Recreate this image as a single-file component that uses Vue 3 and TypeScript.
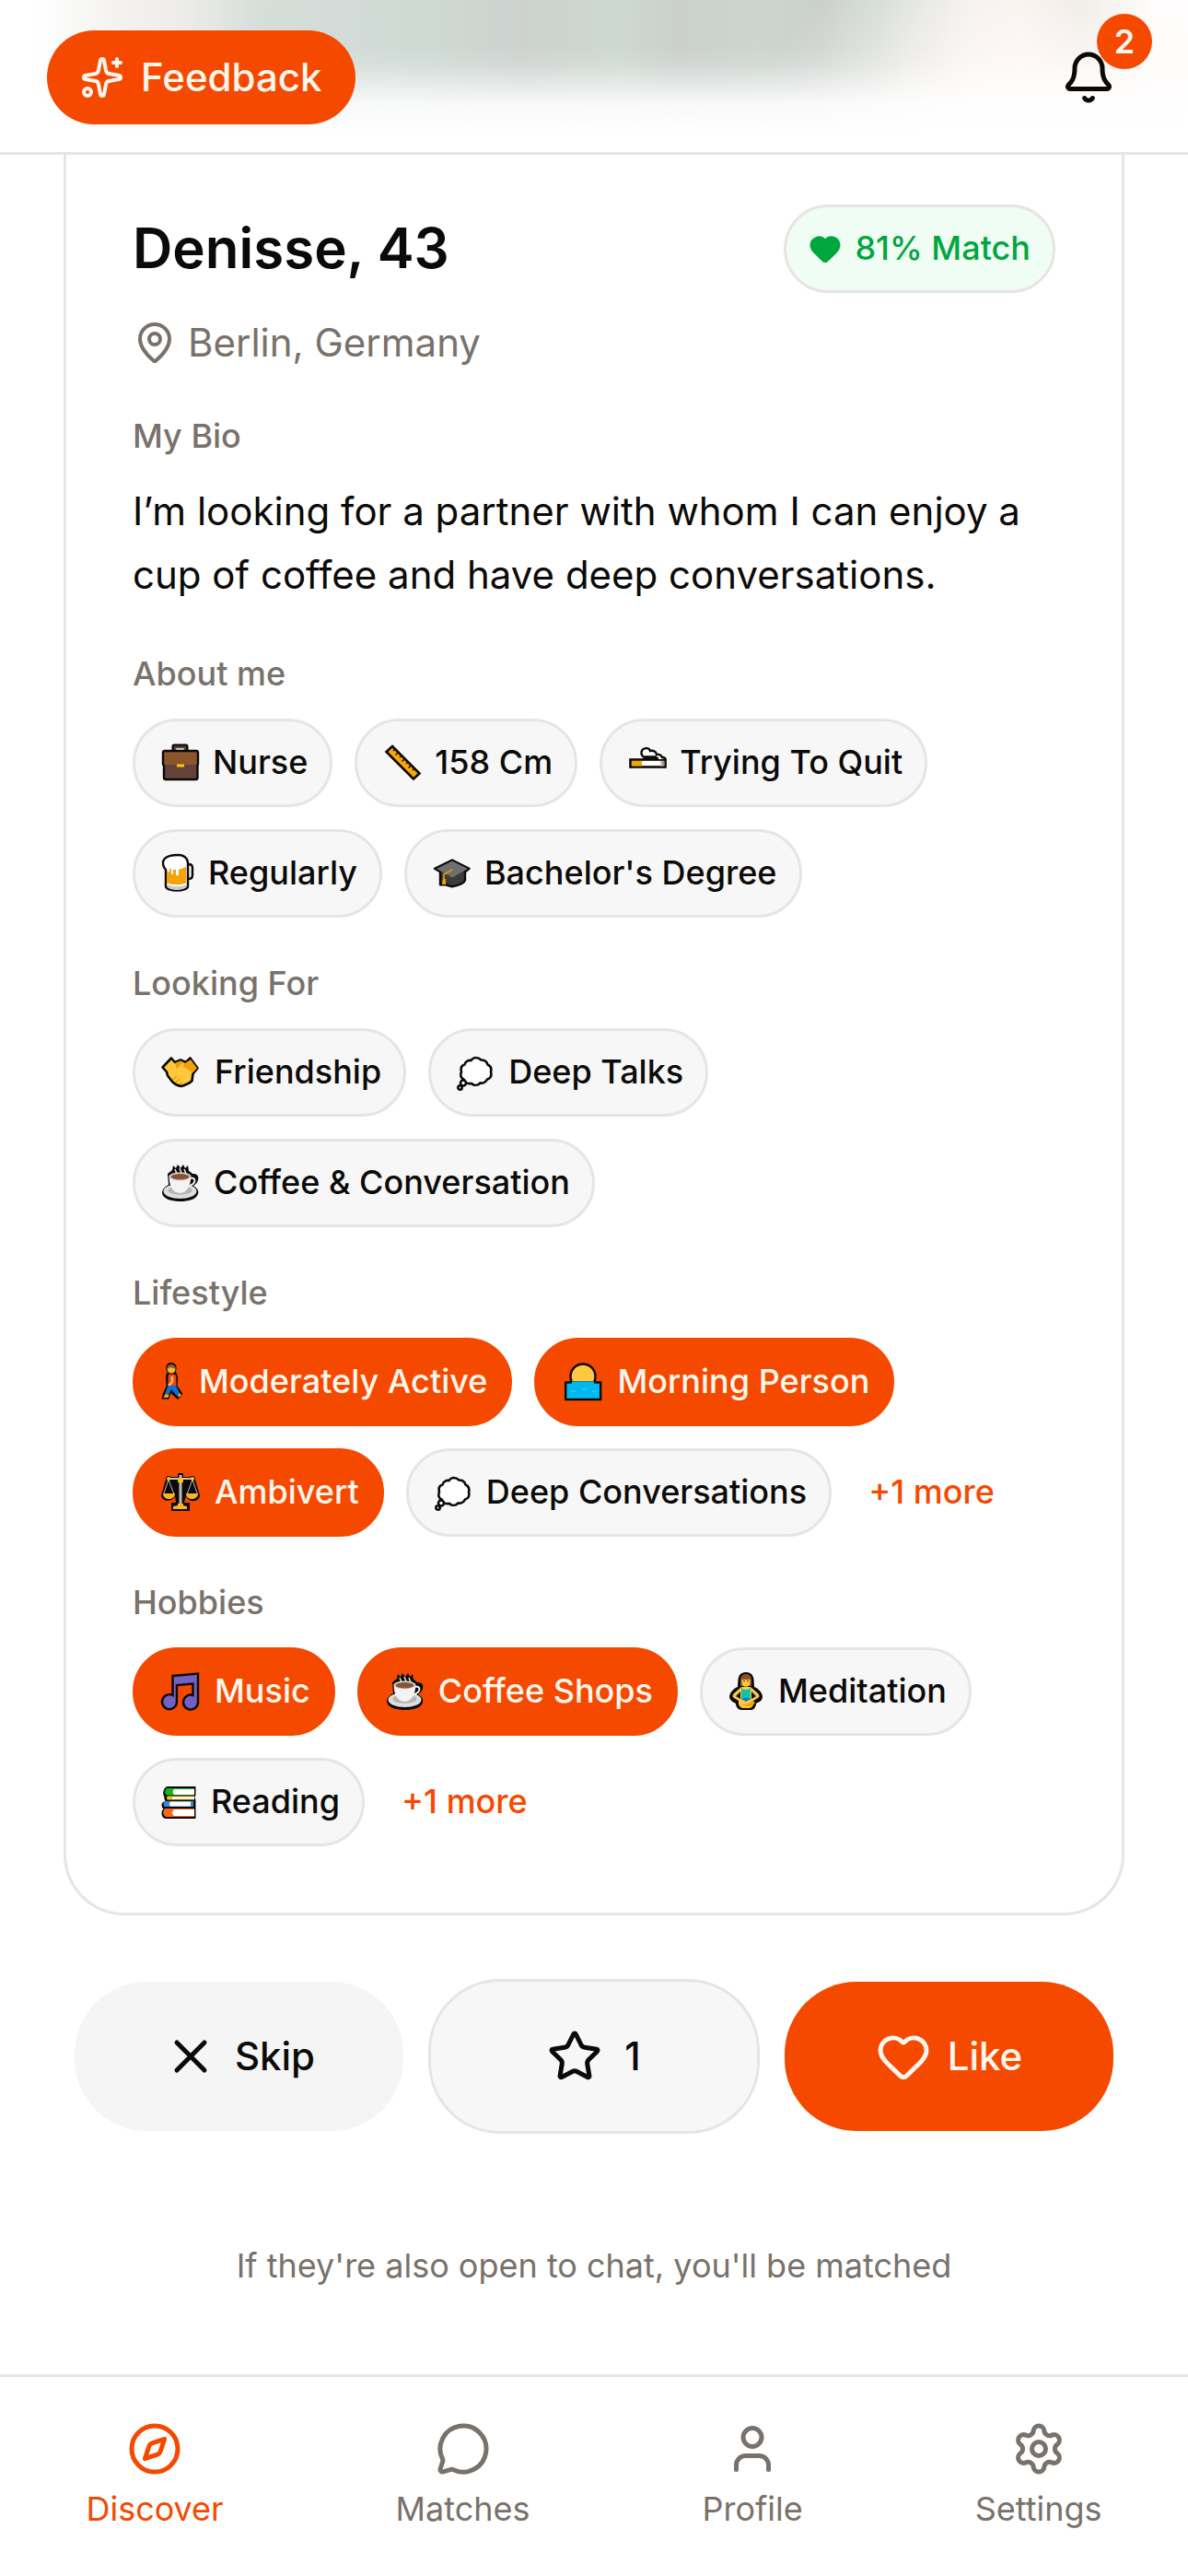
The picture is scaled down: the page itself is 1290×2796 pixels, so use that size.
<script setup lang="ts">
interface Glyph {
  width: number
  body: string
}

interface Chip {
  label: string
  glyph: string
  active?: boolean
}

interface Section {
  title: string
  chips: Chip[]
  more?: string
}

interface Tab {
  label: string
  icon: string
  active?: boolean
}

const coffee = `
  <path d="M16 9l1-5 3 3 2-4 3 4 3-4 2 4 3-3 1 6c2 1 3 2 4 3 6 0 7 3 6 7-1 3-3 5-5 6 5 3 6 6 5 9-2 6-11 8-19 8S6 41 5 34c0-4 3-7 7-9l-1-12z" fill="#0c0a09"/>
  <ellipse cx="24.500" cy="32" rx="18" ry="8" fill="#dedede"/>
  <ellipse cx="24.500" cy="31" rx="13" ry="5" fill="#b5b5b5"/>
  <path d="M12.700 16h23.600c0 9-4 18-12 18s-12-9-11.600-18z" fill="#f3f3f3"/>
  <path d="M36 18c5-2 7 5-1 8" fill="none" stroke="#f3f3f3" stroke-width="2"/>
  <ellipse cx="24.500" cy="16" rx="12" ry="4.500" fill="#d5d5d5"/>
  <ellipse cx="24.500" cy="16.300" rx="10" ry="3.200" fill="#8a5234"/>
  <path d="M19 8l2 5M24 7l2 5M29 8l2 5" stroke="#e6e6e6" stroke-width="1.500" fill="none"/>`

const thought = `
  <g fill="#fff" stroke="#0c0a09" stroke-width="2.600">
    <path d="M24.500 7c3 0 4.500 1 6 2.500 3 0 6 1.500 7 5 3 1.500 4.500 4.500 3.500 8 1 4-.5 7-4 8-1.500 3-4 4.500-7.500 4-3 3-7 3-9.500.5-3.500.5-7-.5-8-4-3.500-1.500-4.500-5-3-8.500-1-4 0-7 3.500-8 1-3.500 4-5 7-4.500 1.500-2 3-3 5-3z"/>
    <circle cx="11" cy="34.500" r="3"/>
    <circle cx="7.500" cy="39.500" r="2.200"/>
  </g>`

const glyphs: Record<string, Glyph> = {
  briefcase: {
    width: 46,
    body: `
      <path d="M17 10V5q0-1 1-1h13q1 0 1 1v5" fill="none" stroke="#0c0a09" stroke-width="3"/>
      <path d="M19 9V6h11v3" fill="none" stroke="#5d4037" stroke-width="2.500"/>
      <rect x="7" y="22" width="36.500" height="19" rx="2" fill="#63423b" stroke="#0c0a09" stroke-width="2.400"/>
      <path d="M7.500 10h34.500q2 0 2 2v13H6V12q0-2 1.500-2z" fill="#8b5629"/>
      <path d="M7 26q-1-1-1-2V12q0-2 2-2h34q2 0 2 2v12q0 1-1 2" fill="none" stroke="#0c0a09" stroke-width="2.400"/>
      <rect x="21" y="24.500" width="8" height="3" fill="#ffc20e"/>`,
  },
  ruler: {
    width: 46,
    body: `
      <path d="M14 5l29.500 29.500-6.500 6L7.500 11z" fill="#f9a70b" stroke="#0c0a09" stroke-width="2.600"/>
      <path d="M17 8l-2 2M20.500 11.500l-3 3M24 15l-2 2M27.500 18.500l-3 3M31 22l-2 2M34.500 25.500l-3 3M38 29l-2 2" stroke="#0c0a09" stroke-width="1.400"/>`,
  },
  cigarette: {
    width: 46,
    body: `
      <rect x="6.500" y="19.500" width="38" height="8" fill="#fff" stroke="#0c0a09" stroke-width="2.600"/>
      <path d="M8 21h11v5.500H8z" fill="#f5a300"/>
      <path d="M39 21h2v5.500h-2z" fill="#f5b9a8"/>
      <path d="M41 21h2.500v5.500H41z" fill="#9a9a9a"/>
      <path d="M28 17c-5 3-10 0-10-5s7-8 10-3c4-1 7 1 8 4 3-1 5 1 6 3l3 3H28q-5-1-5-3z" fill="#fff"/>
      <path d="M25 17.500c-5 0-7-3-6.500-6.500C20 6 27 6 28 10c3.500-1 6.500 1 7 4 3-.5 5 .5 6 3 2 0 3.500 1 3.500 3M20 19c6-2 12-1 17-1M22 16.500h13" fill="none" stroke="#0c0a09" stroke-width="2.400"/>`,
  },
  beer: {
    width: 41,
    body: `
      <path d="M31 13h3q4 0 4 4v8q0 4-4 4h-3z" fill="#eee" stroke="#0c0a09" stroke-width="2.400"/>
      <path d="M9 19c-3-3-4-8-2-11 3-5 11-5 16-5 6 0 10 4 10 9v25c0 6-24 6-24 0z" fill="#fff" stroke="#0c0a09" stroke-width="2.400"/>
      <path d="M10 20l3 2v-4h2v6h2v-5h3v6h3v-6l8-3v17c-3 3-17 3-21 0z" fill="#f5a30a"/>
      <path d="M11 35c5 3 15 3 20 0v3c-3 4-17 4-20 0z" fill="#c9c9c9"/>`,
  },
  cap: {
    width: 46,
    body: `
      <path d="M25 8.500l18.500 9.300-4.500 3.500v9c-1 4-8 6-14 7-3-.5-5-1-7-2h-6v-14l-6-3.500z" fill="#3b3b3b" stroke="#0c0a09" stroke-width="2.400" stroke-linejoin="round"/>
      <path d="M25 9.500l17 8.500-17 9.500L8 18z" fill="#6f6f6f"/>
      <path d="M25 19l-9 5v8" fill="none" stroke="#e59a0a" stroke-width="1.600"/>
      <path d="M15 29h3v6h-4z" fill="#f5a30a"/>`,
  },
  hands: {
    width: 48,
    body: `
      <path d="M15 7.500l4 4.500 6-2.500 6 2.500 4.500-4.500 8 11-5 6-1 7.500c-3 3-8 5-11.500 6-4-.5-8-3-10-5l-5-6.500-1-4-4.500-5z" fill="#ffc83d" stroke="#0c0a09" stroke-width="2.600" stroke-linejoin="round"/>
      <path d="M30 13l6-4 7 9.500-5 5-5-4-6-3z" fill="#f3a00d"/>
      <path d="M20 13l5-2 2 1-6 6zM17 31l4-4M20 34l4-4M24 36l3-3" stroke="#e59a0a" stroke-width="1.200" fill="#f3a00d"/>`,
  },
  thought: { width: 46, body: thought },
  coffee: { width: 47, body: coffee },
  walk: {
    width: 31,
    body: `
      <path d="M14.500 2c6 0 7.500 6 5 10 3 3 3 9 2 15l6 9-5 6-3-2-5-5-2 6.500H4.500l1-5 4-9-.5-10c0-3 1-4 2-5-4-4-1-10.500 3.500-10.500z" fill="#0c0a09"/>
      <circle cx="15" cy="9" r="4.500" fill="#f9b52b"/>
      <path d="M10.500 9c-1-6 9-7 9.500 0l-6-2z" fill="#8b5a36"/>
      <path d="M12.500 14.500h6q2 1 2 5v8h-9v-9q0-3 1-4z" fill="#e9432c"/>
      <path d="M16 17v6l-4 4" stroke="#ffc83d" stroke-width="2.400" fill="none"/>
      <path d="M11.500 27h8.500l4 8-3 3-6-7-3 6-4-1z" fill="#0b6fd8"/>
      <path d="M8.500 36l4 1-1 3H6.500zM22 37l2-2 2 2-3 3z" fill="#f9a70b"/>`,
  },
  sunrise: {
    width: 49,
    body: `
      <circle cx="26" cy="17" r="13.500" fill="#ffc83d" stroke="#0c0a09" stroke-width="2.400"/>
      <rect x="7.200" y="23.500" width="38" height="18.500" fill="#00b8f0" stroke="#0c0a09" stroke-width="2.400"/>
      <path d="M14 24h24" stroke="#00b8f0" stroke-width="3"/>
      <path d="M13 33h5M25 31h5M36 33h4" stroke="#4fd2fa" stroke-width="1.200"/>`,
  },
  scales: {
    width: 48,
    body: `
      <path d="M22 2h6v4l7 0q6-3 6 3l5 17c0 7-12 9-15 1l-2 7h6v9H15v-9h5l-1-7c-4 8-15 5-15-1l5-17q0-6 6-3h7z" fill="#0c0a09"/>
      <path d="M12 9L6.500 25M12 9l6 16M38 9l-6 16M38 9l5.500 16" stroke="#b9b9b9" stroke-width="1"/>
      <path d="M12 8h26" stroke="#c5c5c5" stroke-width="2"/>
      <path d="M25 4v32" stroke="#bdbdbd" stroke-width="3"/>
      <circle cx="25" cy="10" r="3" fill="#ffc20e"/>
      <circle cx="12" cy="8" r="2" fill="#ffc20e"/>
      <circle cx="38" cy="8" r="2" fill="#ffc20e"/>
      <path d="M6 24h13c0 8-13 8-13 0zM31 24h13c0 8-13 8-13 0zM22 35h6v2l4 1v3H17v-3l5-1z" fill="#f9b51c"/>`,
  },
  music: {
    width: 48,
    body: `
      <path d="M16.500 6L44 3.500V34a8 8 0 1 1-5.500-7V14.500L21 16v18a8 8 0 1 1-4.500-7z" fill="#7460c0" stroke="#0c0a09" stroke-width="2.400"/>`,
  },
  meditation: {
    width: 44,
    body: `
      <path d="M23 2c6 0 8 4 8.500 8l.5 8c5 2 8 6 9 10 0 5-3 6-7 8 0 4-3 7-5 7H18c-3 0-6-3-6-7-4-2-7-4-7-8 1-4 4-8 9-10l.5-8C15 6 17 2 23 2z" fill="#0c0a09"/>
      <path d="M17 17V10c0-8 12-8 12 0v7z" fill="#8b4f2b"/>
      <path d="M18.500 10h9v4c0 5-9 5-9 0z" fill="#ffc83d"/>
      <path d="M18 18l-8 7q-3 3 0 5l5 3v4q2 4 5 4h6q4 0 5-4v-4l5-3q3-2 0-5l-8-7z" fill="#ffc83d"/>
      <path d="M17 23l-5 5 5 3zM29 23l5 5-5 3z" fill="#0c0a09"/>
      <path d="M18 18l2 3h6l2-3v14H18z" fill="#12c2a0"/>
      <path d="M18 31q5-3 10 0l-5 3z" fill="#0b7bd0"/>
      <path d="M17 38q9-1 13-5l3 2q-3 5-8 4z" fill="#f3a00d"/>
      <path d="M20 11.500h2M24 11.500h2" stroke="#5d3a1a" stroke-width="1"/>`,
  },
  books: {
    width: 44,
    body: `
      <path d="M10 6h31.500v9l-1 3 1 3v20H10q-5 0-5.500-5 0-4 2-6-2-1-2-4t4-4q-2-3-1-5-2-2-1-6t4-5z" fill="#0c0a09"/>
      <path d="M10 8h30v2H18q-3 2 0 4h22v1.500H10q-4-3 0-7.500z" fill="#12b51c"/>
      <path d="M18 9h22v6H18q-3-3 0-6z" fill="#fff"/>
      <path d="M11 16.500h29v4H11q-2-2 0-4z" fill="#ffbe16"/>
      <path d="M16 17.300h24v2.400H16z" fill="#fff"/>
      <path d="M8 22h31v6H8q-3-3 0-6z" fill="#318be0"/>
      <path d="M14 22.500h22v5H14q-2-2 0-5z" fill="#fff"/>
      <path d="M8 30h32v9H9q-5-4-1-9z" fill="#ff6418"/>
      <path d="M18 31h22v7H18q-4-3 0-7z" fill="#fff"/>`,
  },
}

const sections: Section[] = [
  {
    title: 'About me',
    chips: [
      { label: 'Nurse', glyph: 'briefcase' },
      { label: '158 Cm', glyph: 'ruler' },
      { label: 'Trying To Quit', glyph: 'cigarette' },
      { label: 'Regularly', glyph: 'beer' },
      { label: "Bachelor's Degree", glyph: 'cap' },
    ],
  },
  {
    title: 'Looking For',
    chips: [
      { label: 'Friendship', glyph: 'hands' },
      { label: 'Deep Talks', glyph: 'thought' },
      { label: 'Coffee & Conversation', glyph: 'coffee' },
    ],
  },
  {
    title: 'Lifestyle',
    chips: [
      { label: 'Moderately Active', glyph: 'walk', active: true },
      { label: 'Morning Person', glyph: 'sunrise', active: true },
      { label: 'Ambivert', glyph: 'scales', active: true },
      { label: 'Deep Conversations', glyph: 'thought' },
    ],
    more: '+1 more',
  },
  {
    title: 'Hobbies',
    chips: [
      { label: 'Music', glyph: 'music', active: true },
      { label: 'Coffee Shops', glyph: 'coffee', active: true },
      { label: 'Meditation', glyph: 'meditation' },
      { label: 'Reading', glyph: 'books' },
    ],
    more: '+1 more',
  },
]

const heartPath =
  'M2 9.500a5.500 5.500 0 0 1 9.591-3.676.56.56 0 0 0 .818 0A5.490 5.490 0 0 1 22 9.500c0 2.290-1.500 4-3 5.500l-5.492 5.313a2 2 0 0 1-3 .019L5 15c-1.500-1.500-3-3.200-3-5.500'

const tabs: Tab[] = [
  {
    label: 'Discover',
    active: true,
    icon: '<circle cx="12" cy="12" r="10"/><path d="m16.240 7.760-1.804 5.411a2 2 0 0 1-1.265 1.265L7.760 16.240l1.804-5.411a2 2 0 0 1 1.265-1.265z"/>',
  },
  {
    label: 'Matches',
    icon: '<path d="M2.992 16.342a2 2 0 0 1 .094 1.167l-1.065 3.290a1 1 0 0 0 1.236 1.168l3.413-.998a2 2 0 0 1 1.099.092 10 10 0 1 0-4.777-4.719"/>',
  },
  {
    label: 'Profile',
    icon: '<path d="M19 21v-2a4 4 0 0 0-4-4H9a4 4 0 0 0-4 4v2"/><circle cx="12" cy="7" r="4"/>',
  },
  {
    label: 'Settings',
    icon: '<path d="M9.671 4.136a2.340 2.340 0 0 1 4.659 0 2.340 2.340 0 0 0 3.319 1.915 2.340 2.340 0 0 1 2.330 4.033 2.340 2.340 0 0 0 0 3.831 2.340 2.340 0 0 1-2.330 4.033 2.340 2.340 0 0 0-3.319 1.915 2.340 2.340 0 0 1-4.659 0 2.340 2.340 0 0 0-3.320-1.915 2.340 2.340 0 0 1-2.330-4.033 2.340 2.340 0 0 0 0-3.831A2.340 2.340 0 0 1 6.350 6.051a2.340 2.340 0 0 0 3.319-1.915"/><circle cx="12" cy="12" r="3"/>',
  },
]
</script>

<template>
  <div class="app">
    <header class="topbar">
      <button type="button" class="feedback">
        <svg class="icon icon-md" viewBox="0 0 24 24" aria-hidden="true">
          <path d="M11.017 2.814a1 1 0 0 1 1.966 0l1.051 5.558a2 2 0 0 0 1.594 1.594l5.558 1.051a1 1 0 0 1 0 1.966l-5.558 1.051a2 2 0 0 0-1.594 1.594l-1.051 5.558a1 1 0 0 1-1.966 0l-1.051-5.558a2 2 0 0 0-1.594-1.594l-5.558-1.051a1 1 0 0 1 0-1.966l5.558-1.051a2 2 0 0 0 1.594-1.594z" />
          <path d="M20 2v4M22 4h-4" />
          <circle cx="4" cy="20" r="2" />
        </svg>
        <span>Feedback</span>
      </button>
      <button type="button" class="bell" aria-label="Notifications">
        <svg class="icon icon-lg" viewBox="0 0 24 24" aria-hidden="true">
          <path d="M10.268 21a2 2 0 0 0 3.464 0" />
          <path d="M3.262 15.326A1 1 0 0 0 4 17h16a1 1 0 0 0 .74-1.673C19.410 13.956 18 12.499 18 8A6 6 0 0 0 6 8c0 4.499-1.411 5.956-2.738 7.326" />
        </svg>
        <span class="count">2</span>
      </button>
    </header>

    <main class="content">
      <article class="card">
        <div class="title-row">
          <h1>Denisse, 43</h1>
          <span class="match">
            <svg class="icon icon-sm solid" viewBox="0 0 24 24" aria-hidden="true"><path :d="heartPath" /></svg>
            <span>81% Match</span>
          </span>
        </div>
        <p class="location">
          <svg class="icon icon-md" viewBox="0 0 24 24" aria-hidden="true">
            <path d="M20 10c0 4.993-5.539 10.193-7.399 11.799a1 1 0 0 1-1.202 0C9.539 20.193 4 14.993 4 10a8 8 0 0 1 16 0" />
            <circle cx="12" cy="10" r="3" />
          </svg>
          <span>Berlin, Germany</span>
        </p>

        <section class="section">
          <h2>My Bio</h2>
          <p class="bio">I’m looking for a partner with whom I can enjoy a cup of coffee and have deep conversations.</p>
        </section>

        <section v-for="section in sections" :key="section.title" class="section">
          <h2>{{ section.title }}</h2>
          <div class="chips">
            <span v-for="chip in section.chips" :key="chip.label" class="chip" :class="{ active: chip.active }">
              <svg
                class="glyph"
                :width="glyphs[chip.glyph].width"
                height="46"
                :viewBox="`0 0 ${glyphs[chip.glyph].width} 46`"
                aria-hidden="true"
                v-html="glyphs[chip.glyph].body"
              ></svg>
              <span>{{ chip.label }}</span>
            </span>
            <button v-if="section.more" type="button" class="more">{{ section.more }}</button>
          </div>
        </section>
      </article>

      <div class="actions">
        <button type="button" class="action skip">
          <svg class="icon icon-lg" viewBox="0 0 24 24" aria-hidden="true"><path d="M18 6 6 18M6 6l12 12" /></svg>
          <span>Skip</span>
        </button>
        <button type="button" class="action star" aria-label="Super like, 1 left">
          <svg class="icon icon-lg" viewBox="0 0 24 24" aria-hidden="true">
            <path d="M11.525 2.295a.53.53 0 0 1 .95 0l2.310 4.679a2.123 2.123 0 0 0 1.595 1.160l5.166.756a.53.53 0 0 1 .294.904l-3.736 3.638a2.123 2.123 0 0 0-.611 1.878l.882 5.140a.53.53 0 0 1-.771.560l-4.618-2.428a2.122 2.122 0 0 0-1.973 0L6.396 21.010a.53.53 0 0 1-.770-.560l.881-5.139a2.122 2.122 0 0 0-.611-1.879L2.160 9.795a.53.53 0 0 1 .294-.906l5.165-.755a2.122 2.122 0 0 0 1.597-1.160z" />
          </svg>
          <span>1</span>
        </button>
        <button type="button" class="action like">
          <svg class="icon icon-lg" viewBox="0 0 24 24" aria-hidden="true"><path :d="heartPath" /></svg>
          <span>Like</span>
        </button>
      </div>

      <p class="hint">If they're also open to chat, you'll be matched</p>
    </main>

    <nav class="tabs" aria-label="Main">
      <a v-for="tab in tabs" :key="tab.label" href="#" class="tab" :class="{ active: tab.active }">
        <svg class="icon icon-lg" viewBox="0 0 24 24" aria-hidden="true" v-html="tab.icon"></svg>
        <span>{{ tab.label }}</span>
      </a>
    </nav>
  </div>
</template>

<style>
body {
  background: #fff;
}
</style>

<style scoped>
.app {
  --accent: #f54900;
  --on-accent: #fff7ed;
  --ink: #0c0a09;
  --muted: #79716b;
  --line: #e7e5e4;
  --soft: #f7f7f7;
  display: flex;
  flex-direction: column;
  min-height: 100vh;
  background: #fff;
  color: var(--ink);
  font-family: Inter, "Liberation Sans", sans-serif;
  font-size: 36px;
  line-height: 46px;
}

h1,
h2,
p {
  margin: 0;
}

button {
  margin: 0;
  padding: 0;
  border: 0;
  background: none;
  color: inherit;
  font: inherit;
  cursor: pointer;
}

.icon {
  flex: none;
  fill: none;
  stroke: currentColor;
  stroke-width: 2;
  stroke-linecap: round;
  stroke-linejoin: round;
}

.icon.solid {
  fill: currentColor;
}

.icon-sm {
  width: 36px;
  height: 36px;
}

.icon-md {
  width: 48px;
  height: 48px;
}

.icon-lg {
  width: 60px;
  height: 60px;
}

.topbar {
  position: sticky;
  top: 0;
  z-index: 1;
  display: flex;
  align-items: center;
  justify-content: space-between;
  padding: 33px 57px 30px 51px;
  border-bottom: 3px solid #e5e5e5;
  background:
    linear-gradient(to bottom, rgba(255, 255, 255, 0) 30%, rgba(255, 255, 255, 0.12) 42%, rgba(255, 255, 255, 0.5) 56%, rgba(255, 255, 255, 0.85) 68%, #fff 88%),
    radial-gradient(ellipse 24% 110% at 88% 70%, rgba(255, 250, 248, 0.9) 20%, rgba(255, 250, 248, 0) 100%),
    linear-gradient(to right, #fff 3%, #f3f2f0 10%, #eeedeb 15%, #d6deda 22%, #cfd9d4 36%, #cdd2cf 44%, #ced8d2 52%, #cbd0cd 57%, #cdd5d0 64%, #cbd0cd 69%, #d0d8d3 74%, #f2eeeb 82%, #f6eeeb 86%, #e7e4de 91%, #fff 97%);
}

.feedback {
  display: flex;
  align-items: center;
  gap: 18px;
  height: 102px;
  padding: 0 36px;
  border-radius: 78px;
  background: var(--accent);
  color: var(--on-accent);
  font-size: 42px;
  font-weight: 500;
}

.bell {
  position: relative;
  display: flex;
  align-items: center;
  justify-content: center;
  width: 102px;
  height: 102px;
}

.count {
  position: absolute;
  top: -18px;
  right: -18px;
  width: 60px;
  border-radius: 50%;
  background: var(--accent);
  color: var(--on-accent);
  font-weight: 600;
  line-height: 60px;
  text-align: center;
}

.content {
  display: flex;
  flex-direction: column;
  flex: 1;
}

.card {
  margin: 0 69px;
  padding: 54px 72px 72px;
  border: 3px solid var(--line);
  border-top: 0;
  border-radius: 0 0 66px 66px;
}

.title-row {
  display: flex;
  align-items: center;
  justify-content: space-between;
  gap: 24px;
}

h1 {
  padding-bottom: 2px;
  font-size: 60px;
  font-weight: 600;
  line-height: 84px;
}

.match,
.chip {
  display: flex;
  align-items: center;
  gap: 14px;
  height: 90px;
  padding: 0 24px;
  border: 3px solid var(--line);
  border-radius: 78px;
  background: var(--soft);
  font-weight: 500;
  white-space: nowrap;
}

.match span,
.chip span,
.more {
  padding-bottom: 2px;
}

.match {
  background: #f0fdf4;
  color: #00a63e;
}

.location {
  display: flex;
  align-items: center;
  gap: 12px;
  margin-top: 24px;
  color: var(--muted);
  font-size: 42px;
  line-height: 60px;
}

.section {
  margin-top: 48px;
}

h2 {
  margin-bottom: 24px;
  color: var(--muted);
  font-size: 36px;
  font-weight: 500;
}

.bio {
  padding-bottom: 2px;
  font-size: 42px;
  line-height: 69px;
}

.chips {
  display: flex;
  flex-wrap: wrap;
  gap: 24px;
  padding-top: 2px;
}

.chip.active {
  border-color: var(--accent);
  background: var(--accent);
  color: var(--on-accent);
}

.glyph {
  flex: none;
  overflow: visible;
}

.more {
  padding-right: 16px;
  padding-left: 16px;
  color: var(--accent);
  font-weight: 500;
}

.actions {
  display: grid;
  grid-template-columns: 119fr 120fr 119fr;
  align-items: center;
  gap: 27px;
  padding: 69px 81px 0;
}

.action {
  display: flex;
  align-items: center;
  justify-content: center;
  gap: 18px;
  height: 162px;
  border-radius: 78px;
  background: #f5f5f5;
  font-size: 42px;
  font-weight: 500;
}

.action.star {
  gap: 24px;
  height: 168px;
  border: 3px solid var(--line);
  background: var(--soft);
}

.action.like {
  background: var(--accent);
  color: var(--on-accent);
}

.hint {
  padding: 120px 48px 48px;
  color: var(--muted);
  text-align: center;
}

.tabs {
  display: flex;
  justify-content: space-around;
  padding: 48px 0 50px;
  border-top: 3px solid #e5e5e5;
  background: #fff;
}

.tab {
  display: flex;
  flex-direction: column;
  align-items: center;
  gap: 12px;
  color: var(--muted);
  text-decoration: none;
}

.tab.active {
  color: var(--accent);
}
</style>
